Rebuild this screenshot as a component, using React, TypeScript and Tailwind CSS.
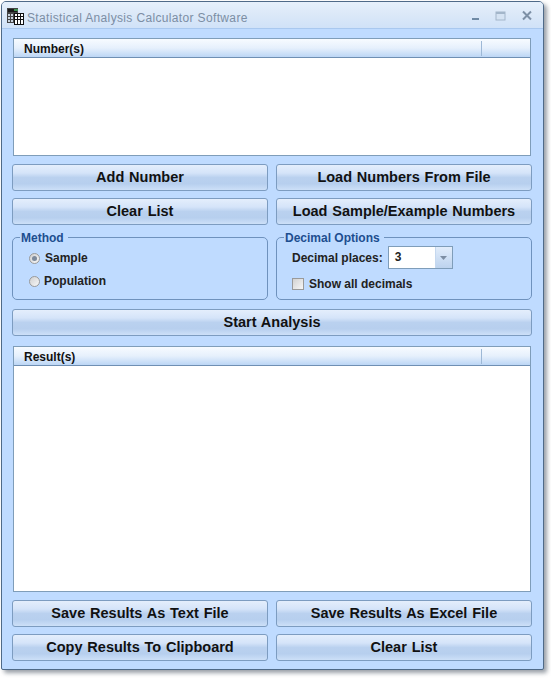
const font = "font-['Liberation_Sans',Arial,sans-serif]"

function AppIcon() {
  return (
    <svg width="18" height="18" viewBox="0 0 18 18" className="shrink-0">
      <rect x="1" y="1" width="11" height="15" fill="#444" />
      <rect x="2" y="2" width="9" height="3" fill="#1a1a1a" />
      <rect x="8" y="2" width="4" height="2" fill="#3d8f4f" />
      <g fill="#c9d3de">
        <rect x="2" y="7" width="2" height="2" />
        <rect x="5" y="7" width="2" height="2" />
        <rect x="2" y="10" width="2" height="2" />
        <rect x="5" y="10" width="2" height="2" />
        <rect x="2" y="13" width="2" height="2" />
        <rect x="5" y="13" width="2" height="2" />
      </g>
      <rect x="8" y="6" width="10" height="12" fill="#111" />
      <g fill="#fff">
        <rect x="9" y="7" width="2" height="2" />
        <rect x="12" y="7" width="2" height="2" />
        <rect x="15" y="7" width="2" height="2" />
        <rect x="9" y="10" width="2" height="2" />
        <rect x="12" y="10" width="2" height="2" />
        <rect x="15" y="10" width="2" height="2" />
        <rect x="9" y="13" width="2" height="4" />
        <rect x="12" y="13" width="2" height="4" />
        <rect x="15" y="13" width="2" height="4" />
      </g>
    </svg>
  )
}

function WindowButtons() {
  return (
    <div className="flex items-center">
      <svg width="9" height="12" viewBox="0 0 9 12" className="mr-[15px] mt-px">
        <rect x="1" y="8" width="7" height="2" fill="#6f8aa5" />
      </svg>
      <svg width="11" height="10" viewBox="0 0 11 10" className="mr-[15px]">
        <rect x="1" y="1" width="9" height="8" fill="#d5e3f3" stroke="#a3b6ca" />
        <rect x="1" y="1" width="9" height="2" fill="#a3b6ca" />
      </svg>
      <svg width="12" height="11" viewBox="0 0 12 11" className="mr-[10px]">
        <path d="M2 1.5 L10 9.5 M10 1.5 L2 9.5" stroke="#7d90a6" strokeWidth="2" fill="none" />
      </svg>
    </div>
  )
}

function ListBox({ title, heightClass }: { title: string; heightClass: string }) {
  return (
    <div className={`ml-px flex w-[518px] flex-col border border-[#7f9db9] bg-white ${heightClass}`}>
      <div className="flex h-[19px] shrink-0 items-center border-b border-[#6f8fb3] bg-gradient-to-b from-[#f7fbff] via-[#e6f0fc] to-[#bcd6f5] pt-px">
        <span className="flex-1 pl-2.5 text-xs font-bold text-[#111]">{title}</span>
        <span className="h-[15px] w-[49px] border-l border-[#9db8d6]" />
      </div>
    </div>
  )
}

function Btn({ label, className = '' }: { label: string; className?: string }) {
  return (
    <button
      className={`h-[27px] rounded-[3px] border border-[#7d9cc0] bg-[linear-gradient(to_bottom,#e4eefc_0%,#d5e4f9_32%,#bad1ef_50%,#b7cfee_75%,#cde0f8_100%)] text-center text-[14.5px] font-bold leading-none text-[#111] [word-spacing:0.8px] ${className}`}
    >
      {label}
    </button>
  )
}

function Group({ title, children }: { title: string; children: React.ReactNode }) {
  return (
    <fieldset className="h-[70px] rounded-[5px] border border-[#6f92bd] pl-[7px] pr-2">
      <legend className="px-px pt-[2px] text-xs font-bold leading-[13px] text-[#1d4e8f]">{title}&nbsp;</legend>
      {children}
    </fieldset>
  )
}

function Radio({ label, checked }: { label: string; checked?: boolean }) {
  return (
    <div className={`flex h-[16px] items-center pl-[9px] text-xs font-bold text-[#222] ${checked ? 'gap-[5px]' : 'gap-1'}`}>
      <span className="flex h-[11px] w-[11px] items-center justify-center rounded-full border border-[#9a9a9a] bg-gradient-to-br from-[#d0d0d0] to-[#f8f8f8]">
        {checked && <span className="h-[5px] w-[5px] rounded-full bg-[#7c8a9c]" />}
      </span>
      {label}
    </div>
  )
}

export default function App() {
  return (
    <div className={`h-[678px] w-[551px] bg-white pb-[8px] pl-px pr-[7px] pt-px ${font}`}>
      <div className="flex h-full flex-col overflow-hidden rounded-t-[5px] rounded-b-[2px] border border-[#4f6a88] bg-[#bfdbff] shadow-[3px_3px_4px_rgba(70,80,95,0.55)]">
        {/* title bar */}
        <div className="flex h-[27px] shrink-0 items-center justify-between border-b border-[#a9c8ef] bg-gradient-to-b from-[#e6f0fb] via-[#dbe8f8] to-[#d0e2f8] pl-1 pt-px">
          <div className="flex items-center gap-[3px]">
            <AppIcon />
            <span className="pt-[5px] text-xs tracking-[0.35px] text-[#7c8ea4]">Statistical Analysis Calculator Software</span>
          </div>
          <WindowButtons />
        </div>

        <div className="flex flex-1 flex-col px-[10px] pt-[9px]">
          <ListBox title="Number(s)" heightClass="h-[118px]" />

          <div className="mt-2 grid grid-cols-[256px_256px] gap-x-2 gap-y-[7px]">
            <Btn label="Add Number" />
            <Btn label="Load Numbers From File" />
            <Btn label="Clear List" />
            <Btn label="Load Sample/Example Numbers" />
          </div>

          <div className="mt-[5px] grid grid-cols-[256px_256px] gap-x-2">
            <Group title="Method">
              <div className="flex flex-col gap-[7px] pt-[5px]">
                <Radio label="Sample" checked />
                <Radio label="Population" />
              </div>
            </Group>
            <Group title="Decimal Options">
              <div className="flex items-center gap-[5px] pl-[8px] pt-px">
                <span className="text-xs font-bold text-[#222]">Decimal places:</span>
                <div className="flex h-[23px] w-[65px] border border-[#7f9db9] bg-white">
                  <span className="flex-1 pl-1.5 text-xs font-bold leading-[21px] text-[#222]">3</span>
                  <span className="flex w-[17px] items-center justify-center border-l border-[#c5d8ef] bg-gradient-to-b from-[#e2edfb] to-[#bdd3ee]">
                    <svg width="7" height="4" viewBox="0 0 7 4">
                      <path d="M0 0 H7 L3.5 4 Z" fill="#7d8ea3" />
                    </svg>
                  </span>
                </div>
              </div>
              <div className="mt-[7px] flex items-center gap-[5px] pl-[8px] text-xs font-bold text-[#222]">
                <span className="h-[12px] w-[12px] border border-[#9a9a9a] bg-gradient-to-br from-[#d2d2d2] to-[#f7f7f7]" />
                Show all decimals
              </div>
            </Group>
          </div>

          <Btn label="Start Analysis" className="mt-[9px] w-[520px]" />

          <div className="mt-[10px]">
            <ListBox title="Result(s)" heightClass="h-[246px]" />
          </div>

          <div className="mt-2 grid grid-cols-[256px_256px] gap-x-2 gap-y-[7px]">
            <Btn label="Save Results As Text File" />
            <Btn label="Save Results As Excel File" />
            <Btn label="Copy Results To Clipboard" />
            <Btn label="Clear List" />
          </div>
        </div>
      </div>
    </div>
  )
}
